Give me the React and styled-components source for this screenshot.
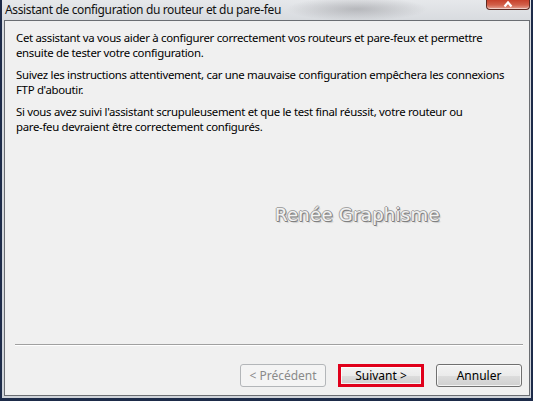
import React from "react";
import styled, { createGlobalStyle } from "styled-components";

const GlobalStyle = createGlobalStyle`
  html, body { margin: 0; padding: 0; background: #1d2b49; }
  body { font-family: "Noto Sans", "Open Sans", sans-serif; }
`;

const Window = styled.div`
  width: 533px;
  height: 401px;
  box-sizing: border-box;
  padding: 0 2px 3px 2px;
  background: #1d2b49;
  display: flex;
`;

const Frame = styled.div`
  flex: 1;
  display: flex;
  flex-direction: column;
  background:
    radial-gradient(ellipse 70px 12px at 355px 9px, rgba(120, 120, 125, 0.4), rgba(120, 120, 125, 0) 100%),
    linear-gradient(to bottom, #e6e8eb 0px, #d8dbdf 20px, #cfd3d9 100%);
`;

const TitleBar = styled.div`
  height: 20px;
  display: flex;
  align-items: flex-start;
  justify-content: space-between;
`;

const Title = styled.div`
  font-family: "Noto Sans", "Open Sans", sans-serif;
  font-size: 12px;
  line-height: 19px;
  color: #111;
  padding-left: 3px;
  letter-spacing: -0.35px;
`;

const CloseButton = styled.div`
  width: 44px;
  height: 10px;
  margin-right: 1px;
  box-sizing: border-box;
  border: 1px solid #5e2a22;
  border-top: none;
  border-radius: 0 0 4px 4px;
  background: linear-gradient(to bottom, #c7402b 0%, #d2604a 55%, #e6a394 100%);
  display: flex;
  justify-content: center;
  box-shadow: inset 0 -1px 0 rgba(255, 255, 255, 0.5);
`;

const Client = styled.div`
  flex: 1;
  position: relative;
  margin: 0 1px 2px 2px;
  border: 1px solid #6a6d72;
  background: #f0f0f0;
  display: flex;
  flex-direction: column;
`;

const Body = styled.div`
  padding: 9px 8px 0 11px;
  flex: 1;
`;

const Paragraph = styled.p`
  margin: 0 0 7px 0;
  font-family: "Noto Sans", "Open Sans", sans-serif;
  font-size: 11.4px;
  line-height: 15px;
  color: #000;
  letter-spacing: -0.3px;
  white-space: nowrap;
`;

const Watermark = styled.div`
  position: absolute;
  left: 270px;
  top: 183px;
  font-family: "DejaVu Sans", Verdana, sans-serif;
  font-size: 18px;
  letter-spacing: 0.3px;
  color: #f2f2f2;
  text-shadow:
    -1px 0 0 #a5a5a5,
    1px 0 0 #8c8c8c,
    0 -1px 0 #a5a5a5,
    0 1px 0 #808080,
    1px 1px 0 #7a7a7a,
    2px 2px 1px rgba(0, 0, 0, 0.15);
`;

const Separator = styled.div`
  margin: 0 6px 0 10px;
  height: 0;
  border-top: 1px solid #a0a0a0;
  border-bottom: 1px solid #ffffff;
`;

const ButtonRow = styled.div`
  display: flex;
  justify-content: flex-end;
  align-items: center;
  gap: 12px;
  padding: 18px 7px 8px 0;
`;

const Button = styled.button`
  width: 86px;
  height: 23px;
  box-sizing: border-box;
  font-family: "Noto Sans", "Open Sans", sans-serif;
  font-size: 12px;
  padding: 0;
  color: ${(p) => (p.disabled ? "#8a8a8a" : "#000")};
  border: ${(p) => (p.$highlight ? "3px solid #e0001b" : p.disabled ? "1px solid #b3b6b9" : "1px solid #707070")};
  border-radius: ${(p) => (p.$highlight ? "0" : "3px")};
  background: ${(p) =>
    p.disabled
      ? "#f4f4f4"
      : "linear-gradient(to bottom, #f3f3f3 0%, #ebebeb 50%, #dddddd 51%, #cfcfcf 100%)"};
  box-shadow: ${(p) => (p.disabled ? "none" : "inset 0 0 0 1px rgba(255,255,255,0.75)")};
  display: flex;
  align-items: center;
  justify-content: center;
`;

export default function App() {
  return (
    <>
      <GlobalStyle />
      <Window>
        <Frame>
          <TitleBar>
            <Title>Assistant de configuration du routeur et du pare-feu</Title>
            <CloseButton>
              <svg width="10" height="8" viewBox="0 0 10 8">
                <path d="M1.5 6.5 L5 2.5 L8.5 6.5" stroke="#ffffff" strokeWidth="2.2" fill="none" />
              </svg>
            </CloseButton>
          </TitleBar>
          <Client>
            <Body>
              <Paragraph>
                Cet assistant va vous aider à configurer correctement vos routeurs et pare-feux et permettre
                <br />
                ensuite de tester votre configuration.
              </Paragraph>
              <Paragraph>
                Suivez les instructions attentivement, car une mauvaise configuration empêchera les connexions
                <br />
                FTP d'aboutir.
              </Paragraph>
              <Paragraph>
                Si vous avez suivi l'assistant scrupuleusement et que le test final réussit, votre routeur ou
                <br />
                pare-feu devraient être correctement configurés.
              </Paragraph>
            </Body>
            <Watermark>Renée Graphisme</Watermark>
            <Separator />
            <ButtonRow>
              <Button disabled>&lt; Précédent</Button>
              <Button $highlight>Suivant &gt;</Button>
              <Button>Annuler</Button>
            </ButtonRow>
          </Client>
        </Frame>
      </Window>
    </>
  );
}
